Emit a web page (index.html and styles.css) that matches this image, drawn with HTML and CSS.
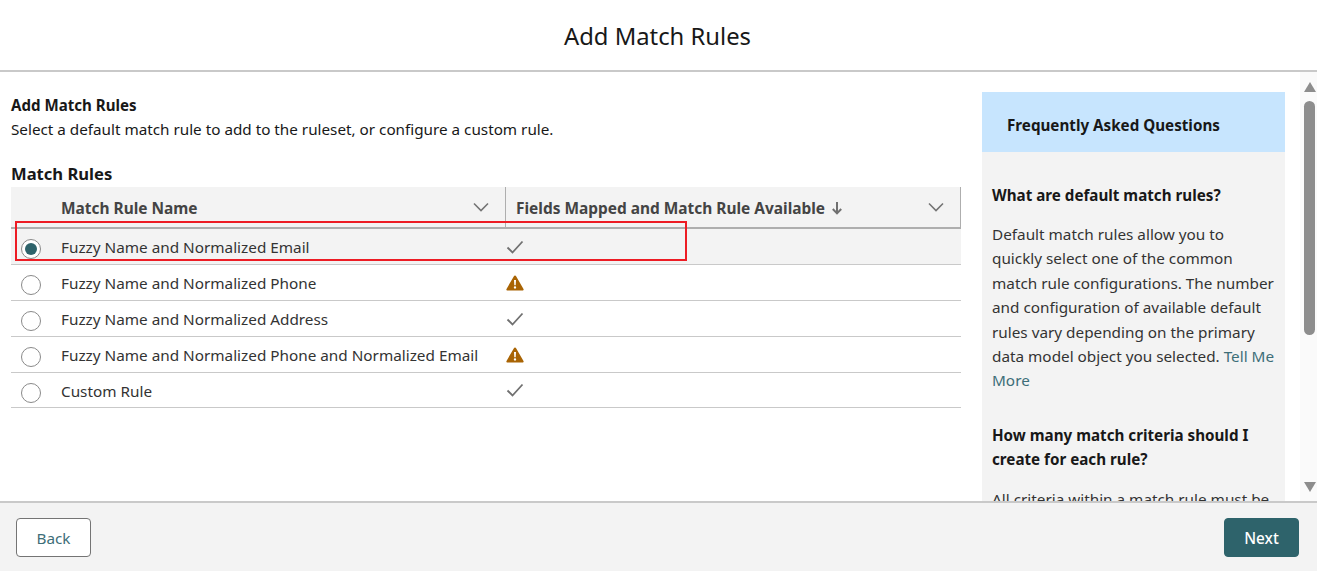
FILE: index.html
```html
<!DOCTYPE html>
<html lang="en">
<head>
<meta charset="utf-8">
<title>Add Match Rules</title>
<link rel="stylesheet" href="styles.css">
</head>
<body>
<div class="page">
  <header class="top"><h1 class="top-title">Add Match Rules</h1></header>
  <main class="main">
    <section class="content">
      <h2 class="intro-title">Add Match Rules</h2>
      <p class="intro-text">Select a default match rule to add to the ruleset, or configure a custom rule.</p>
      <h3 class="table-title">Match Rules</h3>
      <div class="table">
        <div class="row head">
          <div class="cell-name"><span class="head-label">Match Rule Name</span>
            <svg class="chev" viewBox="0 0 16 10"><path d="M1 1.5 8 8.5 15 1.500"/></svg></div>
          <div class="cell-status head-sep"><span class="head-label">Fields Mapped and Match Rule Available <svg class="arrow" viewBox="0 0 12 14"><path d="M6 1V12M1.800 8 6 12.400 10.200 8"/></svg></span>
            <svg class="chev" viewBox="0 0 16 10"><path d="M1 1.5 8 8.5 15 1.500"/></svg></div>
        </div>
        <div class="row selected">
          <div class="cell-name"><span class="radio on"></span><span class="name">Fuzzy Name and Normalized Email</span></div>
          <div class="cell-status"><svg class="check" viewBox="0 0 18 14"><path d="M1.5 7.5 6.500 12.500 16.500 1.500"/></svg></div>
        </div>
        <div class="row">
          <div class="cell-name"><span class="radio"></span><span class="name">Fuzzy Name and Normalized Phone</span></div>
          <div class="cell-status"><svg class="warn" viewBox="0 0 18 16"><path class="warn-bg" d="M9 .6c.5 0 .9.3 1.100.7l7.400 12.600c.4.8-.1 1.700-1 1.700H1.500c-.9 0-1.400-.9-1-1.700L7.900 1.300C8.100.9 8.500.6 9 .6Z"/><path class="warn-mark" d="M8 5h2l-.3 5.200H8.300ZM9 11.200a1.200 1.200 0 1 1 0 2.400 1.200 1.200 0 0 1 0-2.400Z"/></svg></div>
        </div>
        <div class="row">
          <div class="cell-name"><span class="radio"></span><span class="name">Fuzzy Name and Normalized Address</span></div>
          <div class="cell-status"><svg class="check" viewBox="0 0 18 14"><path d="M1.5 7.5 6.500 12.500 16.500 1.500"/></svg></div>
        </div>
        <div class="row">
          <div class="cell-name"><span class="radio"></span><span class="name">Fuzzy Name and Normalized Phone and Normalized Email</span></div>
          <div class="cell-status"><svg class="warn" viewBox="0 0 18 16"><path class="warn-bg" d="M9 .6c.5 0 .9.3 1.100.7l7.400 12.600c.4.8-.1 1.700-1 1.700H1.500c-.9 0-1.400-.9-1-1.700L7.900 1.300C8.100.9 8.500.6 9 .6Z"/><path class="warn-mark" d="M8 5h2l-.3 5.200H8.300ZM9 11.200a1.200 1.200 0 1 1 0 2.400 1.200 1.200 0 0 1 0-2.400Z"/></svg></div>
        </div>
        <div class="row last">
          <div class="cell-name"><span class="radio"></span><span class="name">Custom Rule</span></div>
          <div class="cell-status"><svg class="check" viewBox="0 0 18 14"><path d="M1.5 7.5 6.500 12.500 16.500 1.500"/></svg></div>
        </div>
      </div>
      <div class="annotation"></div>
    </section>
    <aside class="faq">
      <div class="faq-head">Frequently Asked Questions</div>
      <div class="faq-body">
        <h4 class="faq-q">What are default match rules?</h4>
        <p class="faq-a">Default match rules allow you to<br>quickly select one of the common<br>match rule configurations. The number<br>and configuration of available default<br>rules vary depending on the primary<br>data model object you selected. <a class="faq-link" href="#">Tell Me<br>More</a></p>
        <h4 class="faq-q second">How many match criteria should I create for each rule?</h4>
        <p class="faq-a clipped">All criteria within a match rule must be</p>
      </div>
    </aside>
    <div class="scrollbar">
      <span class="sb-up"></span>
      <div class="sb-track"><div class="sb-thumb"></div></div>
      <span class="sb-down"></span>
    </div>
  </main>
  <footer class="foot">
    <button class="btn back">Back</button>
    <button class="btn next">Next</button>
  </footer>
</div>
</body>
</html>
```
FILE: styles.css
```css
* { box-sizing: border-box; }
html, body { margin: 0; height: 100%; overflow: hidden; }
body { font-family: "Noto Sans", "Open Sans", sans-serif; color: #181818; background: #fff; font-size: 15.3px; }
h1, h2, h3, h4, p { margin: 0; }
.page { height: 571px; display: flex; flex-direction: column; }
.top { height: 72px; flex: none; border-bottom: 2px solid #c9c9c9; display: flex; align-items: center; justify-content: center; padding: 2px 2px 0 0; }
.top-title { font-size: 23.8px; font-weight: 400; line-height: 32px; }
.main { height: 429px; flex: none; display: flex; overflow: hidden; position: relative; }
.content { width: 982px; flex: none; padding: 21px 21px 0 11px; position: relative; }
.intro-title { font-size: 15.1px; font-weight: 700; line-height: 24px; }
.intro-text { font-size: 15.25px; line-height: 24px; }
.table-title { font-size: 16.6px; font-weight: 700; line-height: 24px; margin-top: 21px; }
.table { margin-top: 1px; }
.row { display: flex; height: 36px; border-bottom: 1px solid #c9c9c9; }
.row.head { height: 42px; background: #f3f3f3; border-bottom: 2px solid #aeaeae; }
.row.selected { background: #f3f3f3; }
.row.last { height: 35px; }
.row.last .name { padding-top: 2px; }
.cell-name { width: 494px; flex: none; display: flex; align-items: center; padding-left: 10px; }
.head .cell-name { padding-left: 50px; justify-content: space-between; padding-right: 16px; }
.cell-status { flex: 1; display: flex; align-items: center; padding-left: 1px; }
.head .cell-status { padding-left: 10px; padding-right: 16px; justify-content: space-between; }
.head-sep { border-left: 1px solid #aeaeae; border-right: 1px solid #aeaeae; }
.head-label { font-size: 15.45px; font-weight: 700; color: #444; display: flex; align-items: center; gap: 6px; padding-top: 2px; }
.chev { width: 16px; height: 10px; fill: none; stroke: #747474; stroke-width: 1.6; }
.arrow { width: 12px; height: 14px; fill: none; stroke: #707070; stroke-width: 2; }
.radio { width: 20px; height: 20px; border: 1px solid #8a8a8a; border-radius: 50%; background: #fff; flex: none; margin: 5px 20px 0 0; display: flex; align-items: center; justify-content: center; }
.radio.on::after { content: ""; width: 12px; height: 12px; border-radius: 50%; background: #2e636b; }
.name { color: #333; }
.check { width: 18px; height: 14px; fill: none; stroke: #707070; stroke-width: 1.8; }
.warn { width: 18px; height: 16px; }
.warn-bg { fill: #a96404; }
.warn-mark { fill: #fff; }
.annotation { position: absolute; left: 15px; top: 149px; width: 672px; height: 40px; border: 2px solid #ed1c24; }
.faq { width: 303px; flex: none; margin-top: 20px; background: #f3f3f3; }
.faq-head { height: 60px; background: #c7e5fe; padding: 6px 0 0 25px; display: flex; align-items: center; font-weight: 700; font-size: 15.2px; }
.faq-body { padding: 31px 10px 0; }
.faq-q { font-size: 15.2px; line-height: 24px; font-weight: 700; }
.faq-q.second { margin-top: 30px; }
.faq-a { line-height: 24.4px; margin-top: 15px; color: #333; }
.faq-a.clipped { margin-top: 16px; }
.faq-link { color: #3d6e78; text-decoration: none; }
.scrollbar { width: 32px; flex: none; padding: 10px 1px 9px 18px; display: flex; flex-direction: column; align-items: center; background: linear-gradient(to right, #fff 15px, #fafafa 15px); }
.sb-up, .sb-down { width: 0; height: 0; border-left: 6.5px solid transparent; border-right: 6.5px solid transparent; flex: none; }
.sb-up { border-bottom: 10px solid #8d8d8d; }
.sb-down { border-top: 10px solid #8d8d8d; }
.sb-track { flex: 1; width: 11px; padding-top: 9px; }
.sb-thumb { width: 11px; height: 234px; background: #8d8d8d; border-radius: 6px; }
.foot { flex: 1; background: #f3f3f3; border-top: 2px solid #c9c9c9; display: flex; justify-content: space-between; align-items: flex-start; padding: 15px 18px 0 16px; }
.btn { width: 75px; height: 39px; border-radius: 4px; font-family: inherit; font-size: 15.3px; }
.back { background: #fff; border: 1px solid #747474; color: #3d6e78; }
.next { background: #2e636b; border: 1px solid #2e636b; color: #fff; font-weight: 500; }
```
